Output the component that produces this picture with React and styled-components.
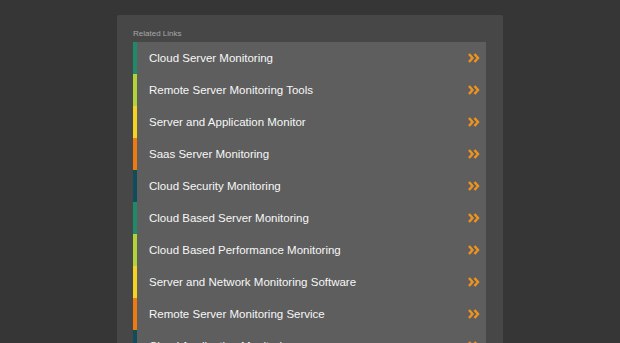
import React from "react";
import styled, { createGlobalStyle } from "styled-components";

const GlobalStyle = createGlobalStyle`
  html, body {
    margin: 0;
    padding: 0;
    background: #363636;
    font-family: "Liberation Sans", Arial, sans-serif;
    overflow: hidden;
  }
`;

const Page = styled.div`
  display: flex;
  justify-content: center;
  padding-top: 15px;
  height: 343px;
  box-sizing: border-box;
`;

const Panel = styled.section`
  width: 386px;
  background: #474747;
  border-radius: 2px 2px 0 0;
  padding: 14px 17px 0 16px;
  box-sizing: border-box;
`;

const Label = styled.div`
  font-size: 8px;
  color: #a8a8a8;
  line-height: 10px;
  margin-bottom: 3px;
`;

const List = styled.ul`
  list-style: none;
  margin: 0;
  padding: 0;
  display: flex;
  flex-direction: column;
`;

const Row = styled.li`
  display: flex;
  align-items: center;
  height: 32px;
  background: #5e5e5e;
  border-left: 4px solid ${(p) => p.$accent};
  padding: 0 6px 1px 12px;
  box-sizing: border-box;
  color: #f7f7f7;
  font-size: 11.5px;
`;

const Title = styled.span`
  flex: 1;
`;

const Arrow = () => (
  <svg width="12" height="10" viewBox="0 0 12 10">
    <polyline points="1,1 4.5,5 1,9" fill="none" stroke="#ef9320" strokeWidth="2.4" />
    <polyline points="6.5,1 10,5 6.5,9" fill="none" stroke="#ef9320" strokeWidth="2.4" />
  </svg>
);

const accents = ["#1f8a6b", "#b3d236", "#f5d31e", "#f07a0e", "#0f4c5c"];

const links = [
  "Cloud Server Monitoring",
  "Remote Server Monitoring Tools",
  "Server and Application Monitor",
  "Saas Server Monitoring",
  "Cloud Security Monitoring",
  "Cloud Based Server Monitoring",
  "Cloud Based Performance Monitoring",
  "Server and Network Monitoring Software",
  "Remote Server Monitoring Service",
  "Cloud Application Monitoring",
];

export default function App() {
  return (
    <>
      <GlobalStyle />
      <Page>
        <Panel>
          <Label>Related Links</Label>
          <List>
            {links.map((text, i) => (
              <Row key={text} $accent={accents[i % accents.length]}>
                <Title>{text}</Title>
                <Arrow />
              </Row>
            ))}
          </List>
        </Panel>
      </Page>
    </>
  );
}
